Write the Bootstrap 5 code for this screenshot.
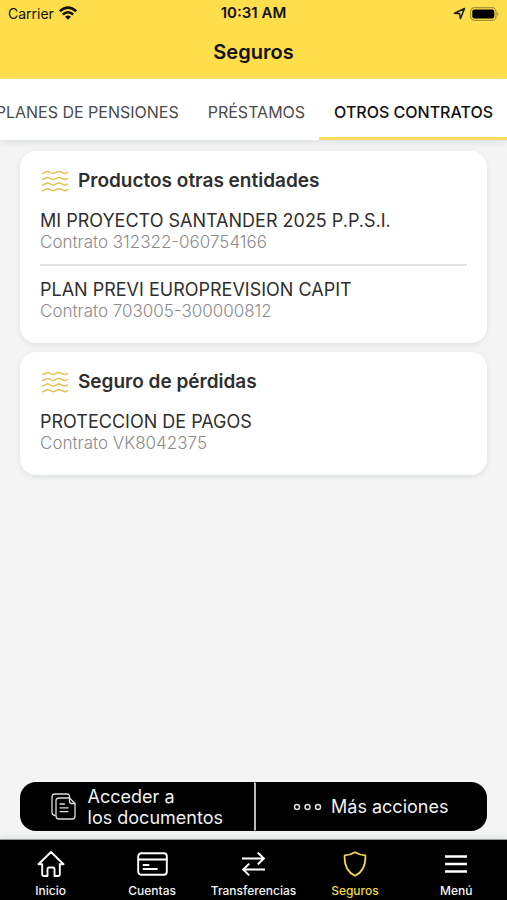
<!DOCTYPE html>
<html lang="es">
<head>
<meta charset="utf-8">
<meta name="viewport" content="width=device-width, initial-scale=1">
<title>Seguros</title>
<link href="https://cdn.jsdelivr.net/npm/bootstrap@5.3.0/dist/css/bootstrap.min.css" rel="stylesheet">
<style>
body { font-family: Inter, "Liberation Sans", sans-serif; background: #f4f4f4; color: #2f2f2f; }
svg { display: block; flex: none; }
.app-head { background: #ffde4b; color: #111; }
.status-bar { height: 27px; font-size: 14px; }
.clock { font-size: 15px; }
.app-title { height: 52px; font-size: 20px; font-weight: 600; padding-bottom: 2px; }
.tab-strip { background: #fff; border-bottom: 1px solid #e6e7e8; box-shadow: 0 2px 6px #dde2e4; }
.tab-strip .nav-link { height: 61px; padding: 8px 14px 0 15px; font-size: 16px; color: #4a4a4a; white-space: nowrap; border-bottom: 3px solid transparent; border-radius: 0; }
.tab-strip .nav-link.active { color: #111; font-weight: 500; border-color: #f7dc5f; }
.product-list { gap: 9px; padding-top: 10px; }
.product { border: 0; border-radius: 16px; box-shadow: 0 2px 5px #dde1e3; padding: 17px 20px 21px; }
.product h2 { font-size: 19px; line-height: 26px; font-weight: 600; }
.contract { line-height: 21px; font-size: 18px; }
.contract small { font-size: 17px; line-height: 22px; font-weight: 300; color: #8b8b8b; }
.contract + .contract { border-top: 2px solid #e2e2e2; margin-top: 11px; padding-top: 13px; }
.quick { border-radius: 16px; overflow: hidden; background: #000; }
.quick .btn { min-height: 49px; color: #f1f1f1; font-size: 18px; line-height: 21px; border-radius: 0; }
.quick .btn + .btn { border-left: 2px solid #bbb; }
.bottom-nav { background: #000; border-top: 1px solid #999; box-shadow: 0 -2px 6px #dde2e4; }
.bottom-nav .nav-link { height: 60px; padding: 11px 0 1px; color: #f4f4f4; font-size: 12px; line-height: 16px; font-weight: 500; }
.bottom-nav .nav-link.active { color: #f2d648; }
</style>
<script src="https://cdn.jsdelivr.net/npm/bootstrap@5.3.0/dist/js/bootstrap.bundle.min.js"></script>
</head>
<body class="d-flex flex-column min-vh-100">
<svg width="0" height="0" class="position-absolute" aria-hidden="true">
  <symbol id="waves" viewBox="0 0 28 22"><g fill="none" stroke="#e5c252" stroke-width="1.500" stroke-linecap="round"><path id="wave-line" d="M1.500 3.500C3.500 3.500 4 1.500 6.500 1.500S9.500 3.500 12 3.500S15 1.500 18 1.500S21 3.500 23.500 3.500S25.500 2.600 26.500 2.400"/><use href="#wave-line" y="6"/><use href="#wave-line" y="11.500"/><use href="#wave-line" y="17.200"/></g></symbol>
</svg>
<header class="app-head">
  <div class="status-bar row g-0 align-items-center px-2">
    <div class="col d-flex align-items-center gap-1">Carrier
      <svg width="20" height="15" viewBox="0 0 20 15" fill="none" stroke="#111" stroke-width="2.600"><path d="M1.800 5.300Q10-1.900 18.200 5.300M4.800 8.500Q10 4 15.200 8.500"/><path d="M10 13.800L7 10.700Q10 8.300 13 10.700Z" fill="#111" stroke="none"/></svg>
    </div>
    <div class="clock col-auto fw-semibold">10:31 AM</div>
    <div class="col d-flex justify-content-end align-items-center gap-1">
      <svg width="13" height="13" viewBox="0 0 13 13" fill="none" stroke="#222" stroke-width="1.600" stroke-linejoin="round"><path d="M1.500 6.200L11.500 1.500L7.500 11.500L6.500 6.600Z"/></svg>
      <svg width="29" height="14" viewBox="0 0 29 14"><rect x=".6" y=".7" width="25.400" height="12.600" rx="3.800" fill="none" stroke="#a99535" stroke-width="1.200"/><rect x="2.300" y="2.500" width="22" height="9" rx="2" fill="#000"/><path d="M27 5Q29.500 7 27 9Z" fill="#a99535"/></svg>
    </div>
  </div>
  <h1 class="app-title d-flex justify-content-center align-items-center m-0">Seguros</h1>
</header>
<nav class="tab-strip nav flex-nowrap justify-content-end" aria-label="Productos">
  <a class="nav-link d-flex align-items-center" href="#">PLANES DE PENSIONES</a>
  <a class="nav-link d-flex align-items-center" href="#">PRÉSTAMOS</a>
  <a class="nav-link d-flex align-items-center active" aria-current="page" href="#">OTROS CONTRATOS</a>
</nav>
<main class="flex-grow-1 d-flex flex-column px-3 pb-2">
  <div class="product-list d-flex flex-column px-1 mb-3">
    <section class="card product">
      <h2 class="d-flex align-items-center gap-2 mb-3"><svg width="30" height="22"><use href="#waves"/></svg><span>Productos otras entidades</span></h2>
      <div class="contract"><div>MI PROYECTO SANTANDER 2025 P.P.S.I.</div><small class="d-block">Contrato 312322-060754166</small></div>
      <div class="contract"><div>PLAN PREVI EUROPREVISION CAPIT</div><small class="d-block">Contrato 703005-300000812</small></div>
    </section>
    <section class="card product">
      <h2 class="d-flex align-items-center gap-2 mb-3"><svg width="30" height="22"><use href="#waves"/></svg><span>Seguro de pérdidas</span></h2>
      <div class="contract"><div>PROTECCION DE PAGOS</div><small class="d-block">Contrato VK8042375</small></div>
    </section>
  </div>
  <div class="quick d-flex mx-1 mt-auto">
    <button type="button" class="btn w-50 p-0 d-flex align-items-center justify-content-center gap-2 text-start">
      <svg class="me-1" width="25" height="27" viewBox="0 0 25 27" fill="none" stroke="#ddd" stroke-width="1.300" stroke-linejoin="round" stroke-linecap="round"><path d="M18.500 4.500V3.500Q18.500 1 16 1H4Q1 1 1 4V19.500Q1 22 4 22.500"/><path d="M18.500 5H8Q5 5 5 8V23Q5 26 8 26H21Q24 26 24 23V10.500Z"/><path d="M18.500 5V8.500Q18.500 10.500 20.500 10.500H24M9 11H13.500M9 14.800H17M9 18.600H17"/></svg>
      <span>Acceder a<br>los documentos</span>
    </button>
    <button type="button" class="btn w-50 p-0 d-flex align-items-center justify-content-center gap-2">
      <svg width="30" height="8" viewBox="0 0 30 8" fill="none" stroke="#ddd" stroke-width="1.500"><circle cx="4" cy="4" r="2.500"/><circle cx="14.500" cy="4" r="2.500"/><circle cx="25" cy="4" r="2.500"/></svg>
      <span>Más acciones</span>
    </button>
  </div>
</main>
<nav class="bottom-nav nav nav-fill flex-nowrap row g-0" aria-label="Principal">
  <a class="nav-link col d-flex flex-column align-items-center justify-content-between" href="#">
    <svg width="28" height="26" viewBox="0 0 28 26" fill="none" stroke="#fff" stroke-width="1.900" stroke-linejoin="round" stroke-linecap="round"><path d="M14 1L1.500 13.200H5.200V23.500Q5.200 25 6.700 25H10.500V18Q10.500 16.500 12 16.500H16Q17.500 16.500 17.500 18V25H21.300Q22.800 25 22.800 23.500V13.200H26.500Z"/></svg>Inicio</a>
  <a class="nav-link col d-flex flex-column align-items-center justify-content-between" href="#">
    <svg width="31" height="26" viewBox="0 0 31 26" fill="none" stroke="#fff" stroke-width="1.900" stroke-linecap="round"><rect x="1.200" y="2.200" width="28.600" height="21.600" rx="3"/><path d="M1.200 8.500H29.800M6.500 14H11.500M6.500 18H20"/></svg>Cuentas</a>
  <a class="nav-link col d-flex flex-column align-items-center justify-content-between" href="#">
    <svg width="25" height="26" viewBox="0 0 25 26" fill="none" stroke="#fff" stroke-width="2" stroke-linecap="square"><path d="M2 7.500H22.500M17.500 2.300L22.800 7.500L17.500 12.700M23 18.500H2.500M7.500 13.300L2.200 18.500L7.500 23.700"/></svg>Transferencias</a>
  <a class="nav-link active col d-flex flex-column align-items-center justify-content-between" aria-current="page" href="#">
    <svg width="24" height="26" viewBox="0 0 24 26" fill="none" stroke="#f2d648" stroke-width="1.800" stroke-linejoin="round"><path d="M12 1.200Q17 4.200 22.300 4.300C23 14 20 21 12 24.800C4 21 1 14 1.700 4.300Q7 4.200 12 1.200Z"/></svg>Seguros</a>
  <a class="nav-link col d-flex flex-column align-items-center justify-content-between" href="#">
    <svg width="24" height="26" viewBox="0 0 24 26" stroke="#fff" stroke-width="2.400"><path d="M1 5.500H23M1 13H23M1 20.500H23"/></svg>Menú</a>
</nav>
</body>
</html>
